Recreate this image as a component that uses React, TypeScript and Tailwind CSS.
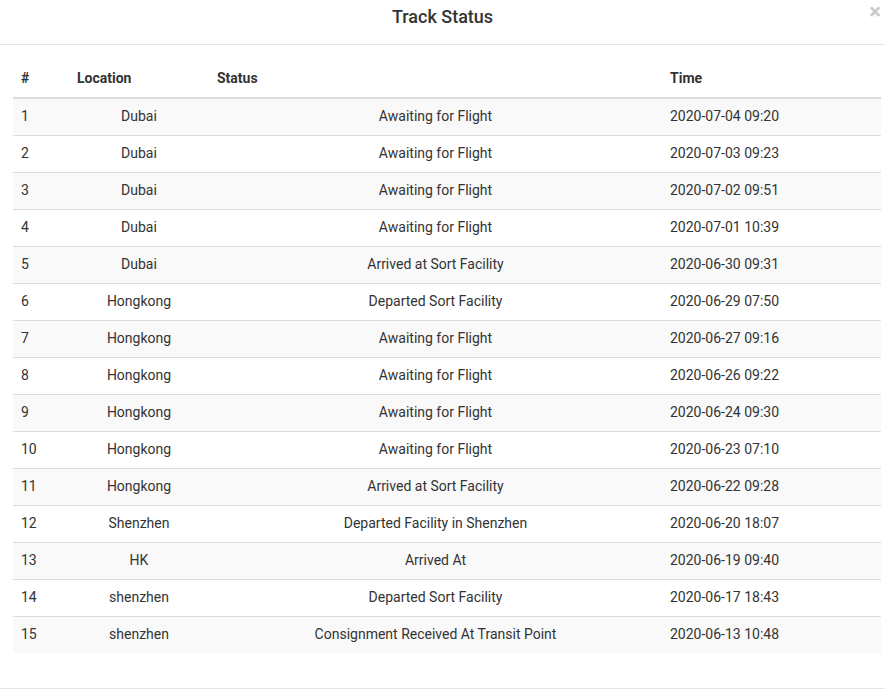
const rows = [
  ['1', 'Dubai', 'Awaiting for Flight', '2020-07-04 09:20'],
  ['2', 'Dubai', 'Awaiting for Flight', '2020-07-03 09:23'],
  ['3', 'Dubai', 'Awaiting for Flight', '2020-07-02 09:51'],
  ['4', 'Dubai', 'Awaiting for Flight', '2020-07-01 10:39'],
  ['5', 'Dubai', 'Arrived at Sort Facility', '2020-06-30 09:31'],
  ['6', 'Hongkong', 'Departed Sort Facility', '2020-06-29 07:50'],
  ['7', 'Hongkong', 'Awaiting for Flight', '2020-06-27 09:16'],
  ['8', 'Hongkong', 'Awaiting for Flight', '2020-06-26 09:22'],
  ['9', 'Hongkong', 'Awaiting for Flight', '2020-06-24 09:30'],
  ['10', 'Hongkong', 'Awaiting for Flight', '2020-06-23 07:10'],
  ['11', 'Hongkong', 'Arrived at Sort Facility', '2020-06-22 09:28'],
  ['12', 'Shenzhen', 'Departed Facility in Shenzhen', '2020-06-20 18:07'],
  ['13', 'HK', 'Arrived At', '2020-06-19 09:40'],
  ['14', 'shenzhen', 'Departed Sort Facility', '2020-06-17 18:43'],
  ['15', 'shenzhen', 'Consignment Received At Transit Point', '2020-06-13 10:48'],
];

export default function App() {
  return (
    <div className="min-h-screen bg-white text-[#333] text-[14px] leading-5 font-['Roboto',sans-serif]">
      {/* Modal header */}
      <div className="relative h-[45px] border-b border-[#e5e5e5] flex items-center justify-center">
        <h4 className="text-[18px] font-medium leading-[26px] -mt-[10px]">Track Status</h4>
        <button className="absolute right-[4px] top-0 text-[#c8c8c8] font-bold text-[22px] leading-6">×</button>
      </div>

      {/* Modal body */}
      <div className="pl-[13px] pr-[4px] pt-[16px] pb-[35px]">
        <table className="w-full border-collapse table-fixed">
          <colgroup>
            <col className="w-[56px]" />
            <col className="w-[140px]" />
            <col className="w-[453px]" />
            <col />
          </colgroup>
          <thead>
            <tr>
              <th className="text-left font-bold px-2 pt-[7px] pb-[9px] border-b-2 border-[#ddd]">#</th>
              <th className="text-left font-bold px-2 pt-[7px] pb-[9px] border-b-2 border-[#ddd]">Location</th>
              <th className="text-left font-bold px-2 pt-[7px] pb-[9px] border-b-2 border-[#ddd]">Status</th>
              <th className="text-left font-bold px-2 pt-[7px] pb-[9px] border-b-2 border-[#ddd]">Time</th>
            </tr>
          </thead>
          <tbody>
            {rows.map((r, i) => (
              <tr key={r[0]} className={i % 2 === 0 ? 'bg-[#f9f9f9]' : ''}>
                <td className={`px-2 pt-[7px] pb-[9px] text-left ${i > 0 ? 'border-t border-[#ddd]' : ''}`}>{r[0]}</td>
                <td className={`px-2 pt-[7px] pb-[9px] text-center ${i > 0 ? 'border-t border-[#ddd]' : ''}`}>{r[1]}</td>
                <td className={`px-2 pt-[7px] pb-[9px] text-center ${i > 0 ? 'border-t border-[#ddd]' : ''}`}>{r[2]}</td>
                <td className={`px-2 pt-[7px] pb-[9px] text-left ${i > 0 ? 'border-t border-[#ddd]' : ''}`}>{r[3]}</td>
              </tr>
            ))}
          </tbody>
        </table>
      </div>

      {/* Modal footer */}
      <div className="border-t border-[#e5e5e5] h-[12px]" />
    </div>
  );
}
